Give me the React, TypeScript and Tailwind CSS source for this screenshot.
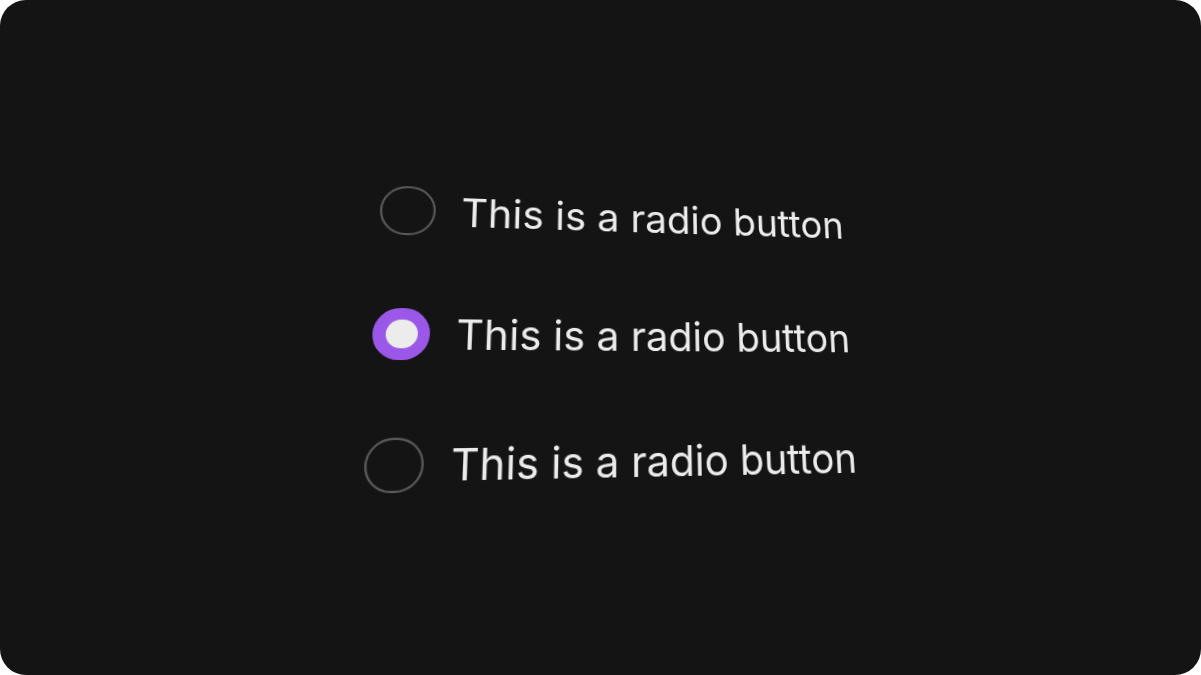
import { useLayoutEffect, useRef, useState } from "react";

const options = ["one", "two", "three"];

// where each row lands in the picture: circle left/right/top/bottom, text start and end
const rows = [
  { l: 382, r: 435, t: 186, b: 234, cy: 210, start: [460, 226.7], end: [842.7, 242.7] },
  { l: 374, r: 429, t: 308, b: 360, cy: 334, start: [455, 350], end: [848.3, 348.3] },
  { l: 366, r: 423.3, t: 438.3, b: 493.3, cy: 465.8, start: [449.3, 481], end: [855, 472.7] },
];

const PITCH = 120;

// natural point [x, y] in the list -> where it lands [X, Y]
const anchors: [number, number, number, number][] = rows.flatMap((row, i) => {
  const y = i * PITCH;
  return [
    [0, y + 24.5, row.l, row.cy],
    [52, y + 24.5, row.r, row.cy],
    [26, y, (row.l + row.r) / 2, row.t],
    [26, y + 49, (row.l + row.r) / 2, row.b],
    [77, y + 39, row.start[0], row.start[1]],
    [468.2, y + 39, row.end[0], row.end[1]],
  ] as [number, number, number, number][];
});

// least-squares homography, returned as a css matrix3d
function homography(ox: number, oy: number) {
  const m = Array.from({ length: 8 }, () => new Array(9).fill(0));
  const add = (row: number[], v: number) => {
    for (let i = 0; i < 8; i++) {
      for (let j = 0; j < 8; j++) m[i][j] += row[i] * row[j];
      m[i][8] += row[i] * v;
    }
  };
  for (const [x, y, sx, sy] of anchors) {
    const X = sx - ox;
    const Y = sy - oy;
    add([x, y, 1, 0, 0, 0, -X * x, -X * y], X);
    add([0, 0, 0, x, y, 1, -Y * x, -Y * y], Y);
  }
  for (let c = 0; c < 8; c++) {
    let p = c;
    for (let r = c + 1; r < 8; r++) if (Math.abs(m[r][c]) > Math.abs(m[p][c])) p = r;
    [m[c], m[p]] = [m[p], m[c]];
    for (let r = 0; r < 8; r++) {
      if (r === c) continue;
      const f = m[r][c] / m[c][c];
      for (let k = c; k < 9; k++) m[r][k] -= f * m[c][k];
    }
  }
  const h = m.map((r, i) => r[8] / r[i]);
  return `matrix3d(${h[0]},${h[3]},0,${h[6]},${h[1]},${h[4]},0,${h[7]},0,0,1,0,${h[2]},${h[5]},0,1)`;
}

function Radio({ checked }: { checked: boolean }) {
  return checked ? (
    <span className="flex h-[49px] w-[52px] shrink-0 items-center justify-center rounded-full bg-[#9b58e8]">
      <span className="h-[27px] w-[29px] rounded-full bg-[#ececec]" />
    </span>
  ) : (
    <span className="h-[49px] w-[52px] shrink-0 rounded-full border-2 border-[#5a5a5a]" />
  );
}

export default function App() {
  const [selected, setSelected] = useState("two");
  const [transform, setTransform] = useState<string>();
  const box = useRef<HTMLDivElement>(null);

  useLayoutEffect(() => {
    const r = box.current?.getBoundingClientRect();
    if (r) setTransform(homography(r.left, r.top));
  }, []);

  return (
    <div className="h-[675px] w-[1201px] bg-white">
      <div className="flex h-full w-full items-center justify-center overflow-hidden rounded-[26px] bg-[#141414] font-['Inter',sans-serif]">
        <div ref={box}>
          <div
            className="flex origin-top-left flex-col gap-[71px]"
            style={{ transform }}
          >
            {options.map((id) => (
              <button
                key={id}
                onClick={() => setSelected(id)}
                className="flex h-[49px] items-center gap-6 text-left focus:outline-none"
              >
                <Radio checked={selected === id} />
                <span className="whitespace-nowrap text-[40px] leading-none text-[#ececec]">
                  This is a radio button
                </span>
              </button>
            ))}
          </div>
        </div>
      </div>
    </div>
  );
}
